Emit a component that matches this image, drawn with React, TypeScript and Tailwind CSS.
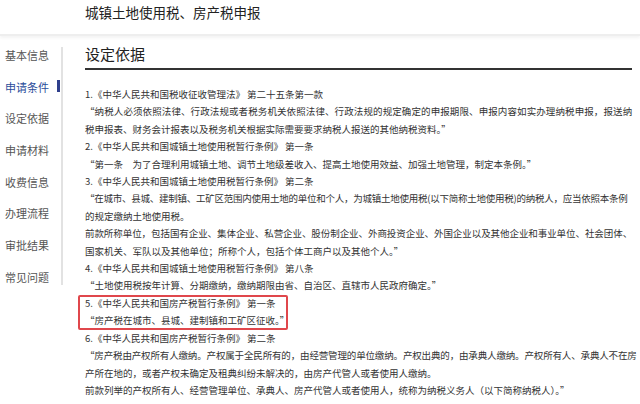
const menu = ['基本信息', '申请条件', '设定依据', '申请材料', '收费信息', '办理流程', '审批结果', '常见问题'];

// fit: 'edge' = line runs to the right edge, 'tight' = long line squeezed a little
const lines: { text: string; fit?: 'edge' | 'tight' }[] = [
  { text: '1.《中华人民共和国税收征收管理法》 第二十五条第一款' },
  { text: '“纳税人必须依照法律、行政法规或者税务机关依照法律、行政法规的规定确定的申报期限、申报内容如实办理纳税申报，报送纳', fit: 'edge' },
  { text: '税申报表、财务会计报表以及税务机关根据实际需要要求纳税人报送的其他纳税资料。”' },
  { text: '2.《中华人民共和国城镇土地使用税暂行条例》 第一条' },
  { text: '“第一条　为了合理利用城镇土地、调节土地级差收入、提高土地使用效益、加强土地管理，制定本条例。”' },
  { text: '3.《中华人民共和国城镇土地使用税暂行条例》 第二条' },
  { text: '“在城市、县城、建制镇、工矿区范围内使用土地的单位和个人，为城镇土地使用税(以下简称土地使用税)的纳税人，应当依照本条例', fit: 'tight' },
  { text: '的规定缴纳土地使用税。' },
  { text: '前款所称单位，包括国有企业、集体企业、私营企业、股份制企业、外商投资企业、外国企业以及其他企业和事业单位、社会团体、', fit: 'edge' },
  { text: '国家机关、军队以及其他单位；所称个人，包括个体工商户以及其他个人。”' },
  { text: '4.《中华人民共和国城镇土地使用税暂行条例》 第八条' },
  { text: '“土地使用税按年计算、分期缴纳，缴纳期限由省、自治区、直辖市人民政府确定。”' },
  { text: '5.《中华人民共和国房产税暂行条例》 第一条' },
  { text: '“房产税在城市、县城、建制镇和工矿区征收。”' },
  { text: '6.《中华人民共和国房产税暂行条例》 第二条' },
  { text: '“房产税由产权所有人缴纳。产权属于全民所有的，由经营管理的单位缴纳。产权出典的，由承典人缴纳。产权所有人、承典人不在房', fit: 'edge' },
  { text: '产所在地的，或者产权未确定及租典纠纷未解决的，由房产代管人或者使用人缴纳。' },
  { text: '前款列举的产权所有人、经营管理单位、承典人、房产代管人或者使用人，统称为纳税义务人（以下简称纳税人）。”' },
];

export default function App() {
  return (
    <div className="relative w-[640px] h-[404px] overflow-hidden bg-white font-['Noto_Sans_CJK_SC',sans-serif]">
      {/* Header */}
      <header className="h-[36px] border-b-2 border-[#eeeeee] shadow-[0_2px_3px_rgba(0,0,0,0.05)] pl-[85px]">
        <h1 className="text-[13.5px] leading-[24px] text-[#222]">城镇土地使用税、房产税申报</h1>
      </header>

      <div className="flex items-start">
        {/* Sidebar */}
        <nav className="mt-[11px] w-[63px] border-r-2 border-[#e2e2e2] flex flex-col gap-[15.7px]">
          {menu.map((item, i) => (
            <div
              key={item}
              className={`relative pl-[5px] text-[11px] leading-[16px] ${i === 1 ? 'text-[#2b4c9b]' : 'text-[#555]'}`}
            >
              {item}
              {i === 1 && <span className="absolute right-[1px] top-[1px] w-[3px] h-[12px] bg-[#2f3f8c]" />}
            </div>
          ))}
        </nav>

        {/* Content */}
        <main className="ml-[22px] mt-[8px] w-[547px]">
          <h2 className="text-[15px] leading-[20px] text-[#222] pb-[4px] border-b-2 border-[#333]">设定依据</h2>
          <div className="mt-[16px] text-[9.5px] leading-[17.4px] text-[#333] whitespace-nowrap">
            {lines.map((line, i) => (
              <p
                key={i}
                className={
                  line.fit === 'edge'
                    ? 'w-[547px] tracking-[-0.15px] [text-align-last:justify]'
                    : line.fit === 'tight'
                      ? 'tracking-[-0.25px]'
                      : ''
                }
              >
                {line.text}
              </p>
            ))}
          </div>
        </main>
      </div>

      {/* highlight annotation */}
      <div className="absolute left-[78px] top-[295px] w-[210px] h-[35px] border-2 border-[#e0474c] rounded-[2px]" />
    </div>
  );
}
